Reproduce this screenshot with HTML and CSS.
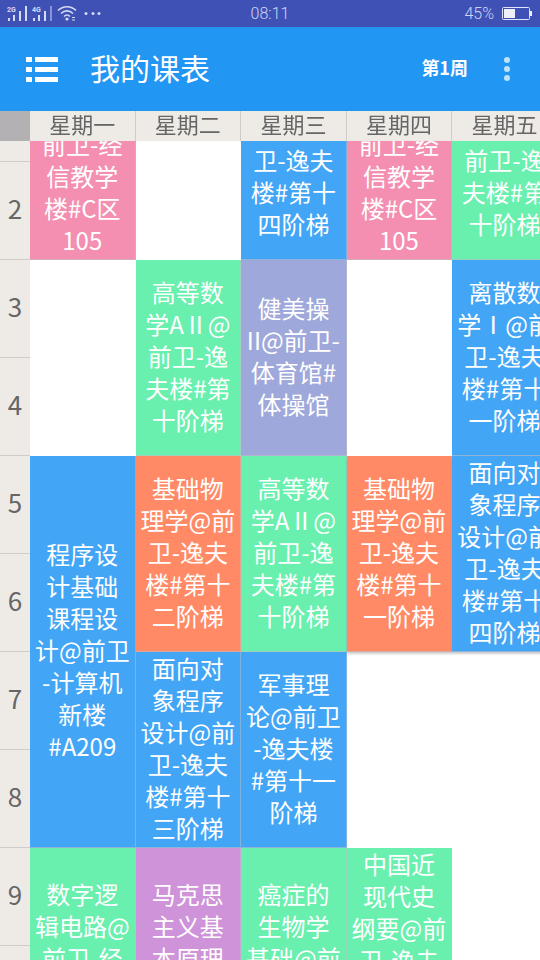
FILE: index.html
```html
<!DOCTYPE html>
<html lang="zh-CN">
<head>
<meta charset="utf-8">
<meta name="viewport" content="width=device-width, initial-scale=1">
<title>我的课表</title>
<link rel="stylesheet" href="styles.css">
</head>
<body>
<div class="status">
  <div class="status-left">
    <svg class="signals" viewBox="0 0 104 27" aria-hidden="true">
      <g fill="#d5daf5">
        <text x="7" y="12" class="net">2G</text>
        <path d="M8 18h2v3H8zM13 15h2v6h-2zM19 11h2v10h-2zM25 6h2v15h-2z"/>
        <text x="32" y="12" class="net">4G</text>
        <path d="M33 18h2v3h-2zM38 15h2v6h-2zM44 11h2v10h-2z"/>
        <path d="M50 6h2v15h-2z" opacity=".5"/>
        <circle cx="67" cy="19" r="1.6"/>
        <path d="M72 17h3v1h-3zM72 19.500h3v1h-3z"/>
        <circle cx="86" cy="13.500" r="1.500"/><circle cx="93" cy="13.500" r="1.500"/><circle cx="99" cy="13.500" r="1.500"/>
      </g>
      <path d="M58 10.500c5-5 13-5 18 0M61 13.500c3.500-3.500 8.500-3.500 12 0M64 16.500c2-2 4-2 6 0" fill="none" stroke="#d5daf5" stroke-width="1.600"/>
    </svg>
  </div>
  <time>08:11</time>
  <div class="status-right">
    <span>45%</span>
    <svg class="battery" viewBox="0 0 30 14" aria-hidden="true">
      <rect x=".5" y=".5" width="27" height="12" rx="1" fill="none" stroke="#e0e4fa"/>
      <path d="M2 2h11v9H2zM28 4h2v5h-2z" fill="#eef0fc"/>
    </svg>
  </div>
</div>
<header class="bar">
  <button class="icon-btn menu" aria-label="菜单">
    <svg viewBox="0 0 32 26" width="32" height="26"><path fill="#fff" d="M0 1h6v5H0zM9 1h23v5H9zM0 11h6v5H0zM9 11h23v5H9zM0 21h6v5H0zM9 21h23v5H9z"/></svg>
  </button>
  <h1>我的课表</h1>
  <button class="week">第1周</button>
  <button class="icon-btn more" aria-label="更多">
    <svg viewBox="0 0 6 24" width="6" height="24"><g fill="#bfe3fd"><circle cx="3" cy="3" r="3"/><circle cx="3" cy="12" r="3"/><circle cx="3" cy="21" r="3"/></g></svg>
  </button>
</header>
<main class="scroller" id="scroller">
<table>
  <colgroup><col class="num-col"><col><col><col><col><col><col><col></colgroup>
  <thead>
    <tr><td class="corner"></td><th scope="col">星期一</th><th scope="col">星期二</th><th scope="col">星期三</th><th scope="col">星期四</th><th scope="col">星期五</th><th scope="col">星期六</th><th scope="col">星期日</th></tr>
  </thead>
  <tbody>
    <tr>
      <th scope="row">1</th>
      <td rowspan="2" class="pink low">前卫-经<br>信教学<br>楼#C区<br>105</td>
      <td rowspan="2"></td>
      <td rowspan="2" class="blue mid">卫-逸夫<br>楼#第十<br>四阶梯</td>
      <td rowspan="2" class="pink low">前卫-经<br>信教学<br>楼#C区<br>105</td>
      <td rowspan="2" class="green mid">前卫-逸<br>夫楼#第<br>十阶梯</td>
      <td rowspan="10"></td><td rowspan="10"></td>
    </tr>
    <tr><th scope="row">2</th></tr>
    <tr>
      <th scope="row">3</th>
      <td rowspan="2"></td>
      <td rowspan="2" class="green">高等数<br>学AⅡ@<br>前卫-逸<br>夫楼#第<br>十阶梯</td>
      <td rowspan="2" class="violet">健美操<br>II@前卫-<br>体育馆#<br>体操馆</td>
      <td rowspan="2"></td>
      <td rowspan="2" class="blue">离散数<br>学Ⅰ@前<br>卫-逸夫<br>楼#第十<br>一阶梯</td>
    </tr>
    <tr><th scope="row">4</th></tr>
    <tr>
      <th scope="row">5</th>
      <td rowspan="4" class="blue">程序设<br>计基础<br>课程设<br>计@前卫<br>-计算机<br>新楼<br>#A209</td>
      <td rowspan="2" class="orange">基础物<br>理学@前<br>卫-逸夫<br>楼#第十<br>二阶梯</td>
      <td rowspan="2" class="green">高等数<br>学AⅡ@<br>前卫-逸<br>夫楼#第<br>十阶梯</td>
      <td rowspan="2" class="orange last">基础物<br>理学@前<br>卫-逸夫<br>楼#第十<br>一阶梯</td>
      <td rowspan="2" class="blue last">面向对<br>象程序<br>设计@前<br>卫-逸夫<br>楼#第十<br>四阶梯</td>
    </tr>
    <tr><th scope="row">6</th></tr>
    <tr>
      <th scope="row">7</th>
      <td rowspan="2" class="blue">面向对<br>象程序<br>设计@前<br>卫-逸夫<br>楼#第十<br>三阶梯</td>
      <td rowspan="2" class="blue">军事理<br>论@前卫<br>-逸夫楼<br>#第十一<br>阶梯</td>
      <td rowspan="2"></td>
      <td rowspan="4"></td>
    </tr>
    <tr><th scope="row">8</th></tr>
    <tr>
      <th scope="row">9</th>
      <td rowspan="2" class="green high">数字逻<br>辑电路@<br>前卫-经</td>
      <td rowspan="2" class="purple high">马克思<br>主义基<br>本原理</td>
      <td rowspan="2" class="green high">癌症的<br>生物学<br>基础@前</td>
      <td rowspan="2" class="green top">中国近<br>现代史<br>纲要@前<br>卫-逸夫</td>
    </tr>
    <tr><th scope="row">10</th></tr>
  </tbody>
</table>
</main>
<script src="app.js"></script>
</body>
</html>
```
FILE: styles.css
```css
* { box-sizing: border-box; }

body {
  margin: 0;
  height: 100vh;
  display: flex;
  flex-direction: column;
  overflow: hidden;
  background: #fff;
  font-family: "Noto Sans CJK SC", sans-serif;
}

.status {
  flex: none;
  height: 27px;
  display: grid;
  grid-template-columns: 1fr auto 1fr;
  align-items: center;
  background: #3f51b5;
  color: #d0d5f2;
  font: 300 16px/27px Roboto, sans-serif;
}
.status svg { display: block; }
.signals { width: 104px; height: 27px; }
.net { font: 700 7px Roboto, sans-serif; }
.status-right {
  display: flex;
  align-items: center;
  justify-content: flex-end;
  gap: 8px;
  padding-right: 8px;
}
.battery { width: 30px; height: 14px; }

.bar {
  flex: none;
  height: 84px;
  display: flex;
  align-items: center;
  padding: 0 20px 0 26px;
  background: #2196f3;
  color: #fff;
}
.bar h1 {
  flex: 1;
  margin: 0 0 0 32px;
  padding-bottom: 4px;
  font-size: 30px;
  line-height: 40px;
  font-weight: 400;
}
.bar button {
  border: 0;
  padding: 0;
  background: none;
  color: inherit;
  font-family: inherit;
}
.icon-btn svg { display: block; }
.bar .week {
  padding-bottom: 4px;
  font-size: 18px;
  line-height: 24px;
  font-weight: 700;
}
.bar .more { padding: 0 10px 0 36px; }

.scroller {
  flex: 1;
  min-height: 0;
  overflow: auto;
  scrollbar-width: none;
}

table {
  width: 142.4vw;
  table-layout: fixed;
  border-collapse: separate;
  border-spacing: 0;
}
.num-col { width: 30px; }

th, td { padding: 0; }

thead th, .corner {
  position: sticky;
  top: 0;
  z-index: 2;
  height: 30px;
}
thead th {
  padding-bottom: 6px;
  background: #eeebe7;
  border-right: 1px solid #cfccca;
  color: #666;
  font-size: 22px;
  line-height: 24px;
  font-weight: 400;
}
.corner { left: 0; z-index: 3; background: #b3b1b4; }

tbody tr { height: 98px; }
tbody th {
  position: sticky;
  left: 0;
  z-index: 1;
  background: #eeebe7;
  border-bottom: 1px solid #cfccca;
  color: #666;
  font-size: 26px;
  line-height: 32px;
  font-weight: 400;
  padding-bottom: 6px;
}
tbody td {
  padding-bottom: 3px;
  color: #fff;
  font-size: 24px;
  line-height: 32px;
  text-align: center;
  vertical-align: middle;
  white-space: nowrap;
}

.pink, .blue, .green, .violet, .orange, .purple {
  border-right: 1px solid rgba(190, 190, 200, .5);
  border-bottom: 1px solid rgba(190, 190, 200, .6);
}
.pink { background: #f48fb1; }
.blue { background: #42a5f5; }
.green { background: #69f0ae; }
.violet { background: #9fa8da; }
.orange { background: #ff8a65; }
.purple { background: #ce93d8; }

td.last { box-shadow: 0 2px 2px rgba(0, 0, 0, .2); }
td.low { vertical-align: bottom; }
td.mid { vertical-align: bottom; padding-bottom: 19px; }
td.high { vertical-align: top; padding-top: 30px; }
td.top { vertical-align: top; }
```
FILE: app.js
```js
document.getElementById("scroller").scrollTop = 77;
```
